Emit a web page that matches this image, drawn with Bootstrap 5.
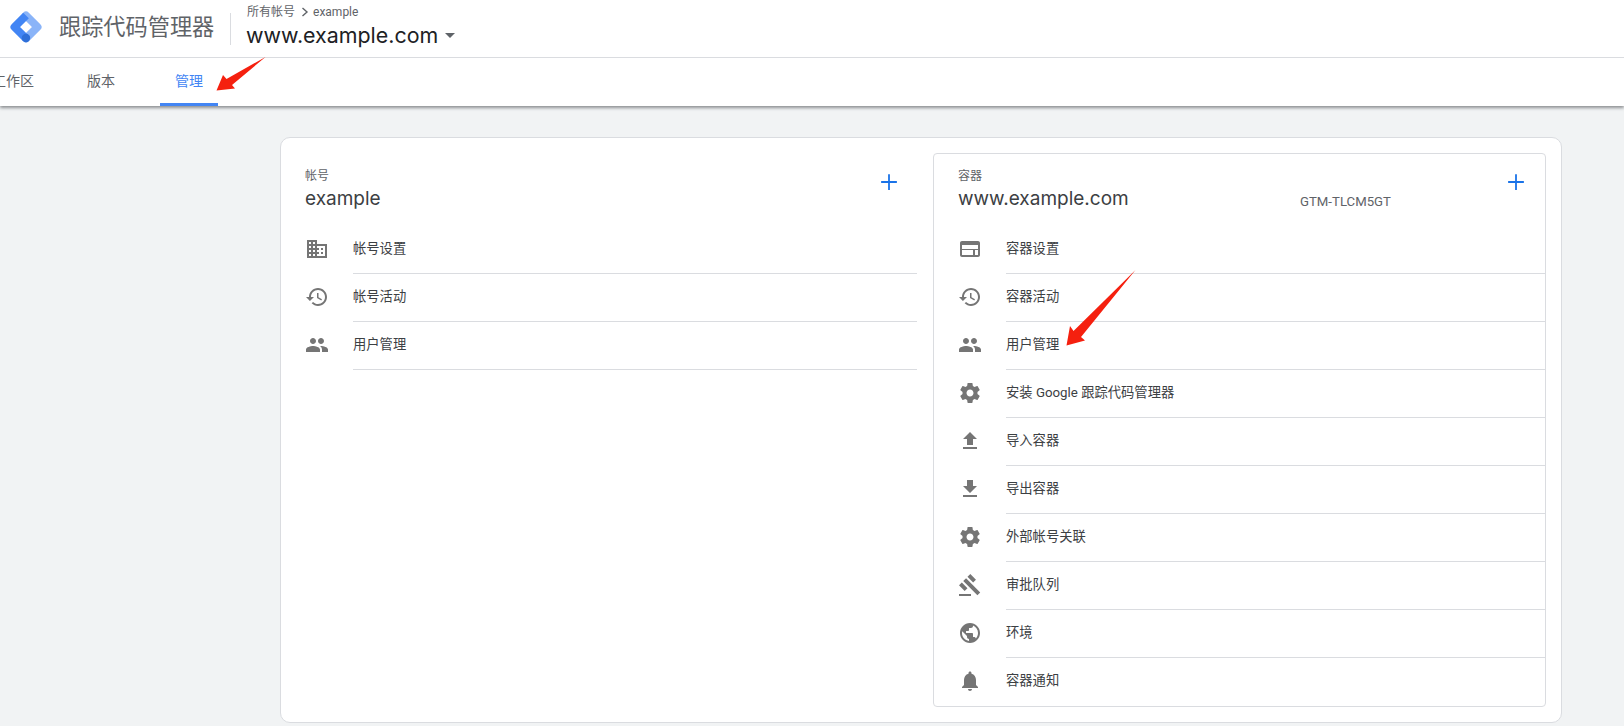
<!DOCTYPE html>
<html lang="zh">
<head>
<meta charset="utf-8">
<title>跟踪代码管理器</title>
<link rel="stylesheet" href="https://cdn.jsdelivr.net/npm/bootstrap@5.3.0/dist/css/bootstrap.min.css">
<style>
html,body{height:726px;overflow:hidden}
body{background:#f1f3f4;font-family:Roboto,"Noto Sans CJK SC",sans-serif;color:#3c4043;position:relative}
.top-hdr{background:#fff;box-shadow:0 2px 3px rgba(60,64,67,.55);height:106px;overflow:hidden;position:relative}
.brand-row{height:58px;border-bottom:1px solid #dadce0;padding-left:10px}
.logo-svg{width:32px;height:32px;margin-right:17px;margin-top:-4px}
.brand-name{font-size:22.2px;color:#5f6368;width:155px;white-space:nowrap;line-height:1;margin-top:-2px}
.brand-sep{width:1px;height:32px;background:#dadce0;margin:0 16px}
.crumb{font-size:12px;color:#5f6368;line-height:14px;margin-top:-4px}
.crumb-chev{width:10px;height:10px;margin:0 3px 0 5px}
.site-name{font-family:"Inter",sans-serif;font-size:21.4px;color:#202124;line-height:28px;margin-top:2px;margin-left:-1px}
.site-caret{width:0;height:0;border-left:5px solid transparent;border-right:5px solid transparent;border-top:5px solid #5f6368;margin-left:7px;margin-top:2px}
.tab-row{height:48px;margin-left:-23px}
.tab-item{font-size:14px;color:#5f6368;padding:0 15px;line-height:46px;height:48px;position:relative}
.tab-gap{margin-right:23px}
.tab-gap2{margin-right:30px}
.tab-on{color:#4285f4;border-bottom:3px solid #4285f4;border-radius:3px 3px 0 0}
.panel{width:1282px;height:586px;margin:31px 0 0 280px;background:#fff;border:1px solid #dadce0;border-radius:10px;padding:15px}
.col-a{width:621px;margin-right:16px;padding-left:9px}
.col-b{width:613px;height:554px;border:1px solid #dadce0;border-radius:4px;padding-left:24px}
.head-box{height:72px;position:relative;padding-top:15px}
.col-a .head-box{height:73px;padding-top:16px}
.head-label{font-size:12px;line-height:14px;color:#5f6368}
.head-name{font-family:"Inter",sans-serif;font-size:19px;line-height:24px;margin-top:4px;color:#3c4043}
.head-id{font-size:13.2px;color:#5f6368;position:absolute;left:342px;top:41px;line-height:14px}
.add-btn{position:absolute;right:19px;top:20px;width:18px;height:18px}
.col-b .add-btn{right:20px;top:19px}
.menu-row{height:48px}
.menu-ico{width:24px;height:24px;fill:#757575;margin-right:24px;margin-top:-2px;flex:none}
.menu-txt{flex:1;height:48px;line-height:45px;font-size:13.3px;color:#3c4043;border-bottom:1px solid #dadce0}
.menu-txt.no-line{border-bottom:0}
.mark-arrow{position:absolute;pointer-events:none}
</style>
</head>
<body>
<header class="top-hdr">
  <div class="brand-row d-flex align-items-center">
    <svg class="logo-svg" viewBox="0 0 32 32"><path d="M16 4.500 27.500 16 16 27.500" fill="none" stroke="#8ab4f8" stroke-width="8" stroke-linejoin="round" stroke-linecap="round"/><path d="M16 4.500 4.500 16 16 27.500" fill="none" stroke="#4285f4" stroke-width="8" stroke-linejoin="round"/><circle cx="16" cy="27" r="4.200" fill="#2f6fd8"/></svg>
    <div class="brand-name">跟踪代码管理器</div>
    <div class="brand-sep"></div>
    <div>
      <div class="crumb d-flex align-items-center">所有帐号<svg class="crumb-chev" viewBox="0 0 10 10"><path d="M2.500 1 7 5 2.500 9" fill="none" stroke="#5f6368" stroke-width="1.400"/></svg>example</div>
      <div class="site-name d-flex align-items-center">www.example.com<span class="site-caret"></span></div>
    </div>
  </div>
  <nav class="tab-row d-flex">
    <div class="tab-item tab-gap">工作区</div>
    <div class="tab-item tab-gap2">版本</div>
    <div class="tab-item tab-on">管理</div>
  </nav>
</header>
<main class="panel d-flex">
  <section class="col-a">
    <div class="head-box">
      <div class="head-label">帐号</div>
      <div class="head-name">example</div>
      <svg class="add-btn" viewBox="0 0 16 16"><path d="M7.200 1h1.600v6.200H15v1.600H8.800V15H7.200V8.800H1V7.200h6.200z" fill="#1a73e8"/></svg>
    </div>
    <div class="menu-row d-flex align-items-center"><svg class="menu-ico" viewBox="0 0 24 24"><path d="M12 7V3H2v18h20V7H12zM6 19H4v-2h2v2zm0-4H4v-2h2v2zm0-4H4V9h2v2zm0-4H4V5h2v2zm4 12H8v-2h2v2zm0-4H8v-2h2v2zm0-4H8V9h2v2zm0-4H8V5h2v2zm10 12h-8v-2h2v-2h-2v-2h2v-2h-2V9h8v10zm-2-8h-2v2h2v-2zm0 4h-2v2h2v-2z"/></svg><div class="menu-txt">帐号设置</div></div>
    <div class="menu-row d-flex align-items-center"><svg class="menu-ico" viewBox="0 0 24 24"><path d="M13 3c-4.970 0-9 4.030-9 9H1l3.890 3.890.07.14L9 12H6c0-3.870 3.130-7 7-7s7 3.130 7 7-3.130 7-7 7c-1.930 0-3.680-.79-4.940-2.060l-1.420 1.420C8.270 19.990 10.510 21 13 21c4.970 0 9-4.030 9-9s-4.030-9-9-9zm-1 5v5l4.280 2.540.72-1.210-3.500-2.080V8H12z"/></svg><div class="menu-txt">帐号活动</div></div>
    <div class="menu-row d-flex align-items-center"><svg class="menu-ico" viewBox="0 0 24 24"><path d="M16 11c1.660 0 2.990-1.340 2.990-3S17.660 5 16 5c-1.660 0-3 1.340-3 3s1.340 3 3 3zm-8 0c1.660 0 2.990-1.340 2.990-3S9.660 5 8 5C6.340 5 5 6.340 5 8s1.340 3 3 3zm0 2c-2.330 0-7 1.170-7 3.500V19h14v-2.500c0-2.330-4.670-3.500-7-3.500zm8 0c-.29 0-.62.02-.97.05 1.160.84 1.970 1.970 1.970 3.450V19h6v-2.500c0-2.330-4.670-3.500-7-3.500z"/></svg><div class="menu-txt">用户管理</div></div>
  </section>
  <section class="col-b">
    <div class="head-box">
      <div class="head-label">容器</div>
      <div class="head-name">www.example.com</div>
      <div class="head-id">GTM-TLCM5GT</div>
      <svg class="add-btn" viewBox="0 0 16 16"><path d="M7.200 1h1.600v6.200H15v1.600H8.800V15H7.200V8.800H1V7.200h6.200z" fill="#1a73e8"/></svg>
    </div>
    <div class="menu-row d-flex align-items-center"><svg class="menu-ico" viewBox="0 0 24 24"><path fill-rule="evenodd" d="M20 4H4c-1.100 0-2 .9-2 2v12c0 1.100.9 2 2 2h16c1.100 0 2-.9 2-2V6c0-1.100-.9-2-2-2zM4 18v-5h11v5zm0-6V8h16v4zm13 6v-5h3v5z"/></svg><div class="menu-txt">容器设置</div></div>
    <div class="menu-row d-flex align-items-center"><svg class="menu-ico" viewBox="0 0 24 24"><path d="M13 3c-4.970 0-9 4.030-9 9H1l3.890 3.890.07.14L9 12H6c0-3.870 3.130-7 7-7s7 3.130 7 7-3.130 7-7 7c-1.930 0-3.680-.79-4.940-2.060l-1.420 1.420C8.270 19.990 10.510 21 13 21c4.970 0 9-4.030 9-9s-4.030-9-9-9zm-1 5v5l4.280 2.540.72-1.210-3.500-2.080V8H12z"/></svg><div class="menu-txt">容器活动</div></div>
    <div class="menu-row d-flex align-items-center"><svg class="menu-ico" viewBox="0 0 24 24"><path d="M16 11c1.660 0 2.990-1.340 2.990-3S17.660 5 16 5c-1.660 0-3 1.340-3 3s1.340 3 3 3zm-8 0c1.660 0 2.990-1.340 2.990-3S9.660 5 8 5C6.340 5 5 6.340 5 8s1.340 3 3 3zm0 2c-2.330 0-7 1.170-7 3.500V19h14v-2.500c0-2.330-4.670-3.500-7-3.500zm8 0c-.29 0-.62.02-.97.05 1.160.84 1.970 1.970 1.970 3.450V19h6v-2.500c0-2.330-4.670-3.500-7-3.500z"/></svg><div class="menu-txt">用户管理</div></div>
    <div class="menu-row d-flex align-items-center"><svg class="menu-ico" viewBox="0 0 24 24"><path d="M19.430 12.980c.04-.32.07-.64.07-.98s-.03-.66-.07-.98l2.110-1.650c.19-.15.24-.42.12-.64l-2-3.460c-.12-.22-.39-.3-.61-.22l-2.490 1c-.52-.4-1.080-.73-1.690-.98l-.38-2.650C14.460 2.180 14.250 2 14 2h-4c-.25 0-.46.18-.49.42l-.38 2.650c-.61.25-1.170.59-1.690.98l-2.490-1c-.23-.09-.49 0-.61.22l-2 3.460c-.13.22-.07.49.12.64l2.110 1.650c-.04.32-.07.65-.07.98s.03.66.07.98l-2.110 1.650c-.19.15-.24.42-.12.64l2 3.460c.12.22.39.3.61.22l2.490-1c.52.4 1.080.73 1.690.98l.38 2.650c.03.24.24.42.49.42h4c.25 0 .46-.18.49-.42l.38-2.650c.61-.25 1.170-.59 1.690-.98l2.490 1c.23.09.49 0 .61-.22l2-3.460c.12-.22.07-.49-.12-.64l-2.110-1.650zM12 15.500c-1.930 0-3.500-1.570-3.500-3.500s1.570-3.500 3.500-3.500 3.500 1.570 3.500 3.500-1.570 3.500-3.500 3.500z"/></svg><div class="menu-txt">安装 Google 跟踪代码管理器</div></div>
    <div class="menu-row d-flex align-items-center"><svg class="menu-ico" viewBox="0 0 24 24"><path d="M9 16h6v-6h4l-7-7-7 7h4zm-4 2h14v2H5z"/></svg><div class="menu-txt">导入容器</div></div>
    <div class="menu-row d-flex align-items-center"><svg class="menu-ico" viewBox="0 0 24 24"><path d="M19 9h-4V3H9v6H5l7 7 7-7zM5 18v2h14v-2H5z"/></svg><div class="menu-txt">导出容器</div></div>
    <div class="menu-row d-flex align-items-center"><svg class="menu-ico" viewBox="0 0 24 24"><path d="M19.430 12.980c.04-.32.07-.64.07-.98s-.03-.66-.07-.98l2.110-1.650c.19-.15.24-.42.12-.64l-2-3.460c-.12-.22-.39-.3-.61-.22l-2.490 1c-.52-.4-1.080-.73-1.690-.98l-.38-2.650C14.460 2.180 14.250 2 14 2h-4c-.25 0-.46.18-.49.42l-.38 2.650c-.61.25-1.170.59-1.690.98l-2.490-1c-.23-.09-.49 0-.61.22l-2 3.460c-.13.22-.07.49.12.64l2.110 1.650c-.04.32-.07.65-.07.98s.03.66.07.98l-2.110 1.650c-.19.15-.24.42-.12.64l2 3.460c.12.22.39.3.61.22l2.490-1c.52.4 1.080.73 1.690.98l.38 2.650c.03.24.24.42.49.42h4c.25 0 .46-.18.49-.42l.38-2.650c.61-.25 1.170-.59 1.690-.98l2.490 1c.23.09.49 0 .61-.22l2-3.460c.12-.22.07-.49-.12-.64l-2.110-1.650zM12 15.500c-1.930 0-3.500-1.570-3.500-3.500s1.570-3.500 3.500-3.500 3.500 1.570 3.500 3.500-1.570 3.500-3.500 3.500z"/></svg><div class="menu-txt">外部帐号关联</div></div>
    <div class="menu-row d-flex align-items-center"><svg class="menu-ico" viewBox="0 0 24 24"><path d="M1 21h12v2H1zM5.245 8.070l2.830-2.827 14.140 14.142-2.828 2.828zM12.317 1l5.657 5.656-2.830 2.830-5.654-5.660zM3.825 9.485l5.657 5.657-2.828 2.828-5.657-5.657z"/></svg><div class="menu-txt">审批队列</div></div>
    <div class="menu-row d-flex align-items-center"><svg class="menu-ico" viewBox="0 0 24 24"><path d="M12 2C6.480 2 2 6.480 2 12s4.480 10 10 10 10-4.480 10-10S17.520 2 12 2zm-1 17.930c-3.950-.49-7-3.850-7-7.930 0-.62.08-1.210.21-1.790L9 15v1c0 1.100.9 2 2 2v1.930zm6.900-2.540c-.26-.81-1-1.390-1.900-1.390h-1v-3c0-.55-.45-1-1-1H8v-2h2c.55 0 1-.45 1-1V7h2c1.100 0 2-.9 2-2v-.41c2.930 1.190 5 4.060 5 7.410 0 2.080-.8 3.970-2.100 5.390z"/></svg><div class="menu-txt">环境</div></div>
    <div class="menu-row d-flex align-items-center"><svg class="menu-ico" viewBox="0 0 24 24"><path d="M12 22c1.100 0 2-.9 2-2h-4c0 1.100.89 2 2 2zm6-6v-5c0-3.070-1.640-5.640-4.500-6.320V4c0-.83-.67-1.500-1.500-1.500s-1.500.67-1.500 1.500v.68C7.630 5.360 6 7.920 6 11v5l-2 2v1h16v-1l-2-2z"/></svg><div class="menu-txt no-line">容器通知</div></div>
  </section>
</main>
<svg class="mark-arrow top-0 start-0" width="1624" height="726" viewBox="0 0 1624 726"><path d="M265.500 57 232 85 235 88.500 216.500 90.500 223 75 226.500 79Z" fill="#f5200f"/><path d="M1135.500 270 1081 337 1085 340.500 1066.500 345.500 1070 326 1073.500 331Z" fill="#f5200f"/></svg>
<script src="https://cdn.jsdelivr.net/npm/bootstrap@5.3.0/dist/js/bootstrap.bundle.min.js"></script>
</body>
</html>
